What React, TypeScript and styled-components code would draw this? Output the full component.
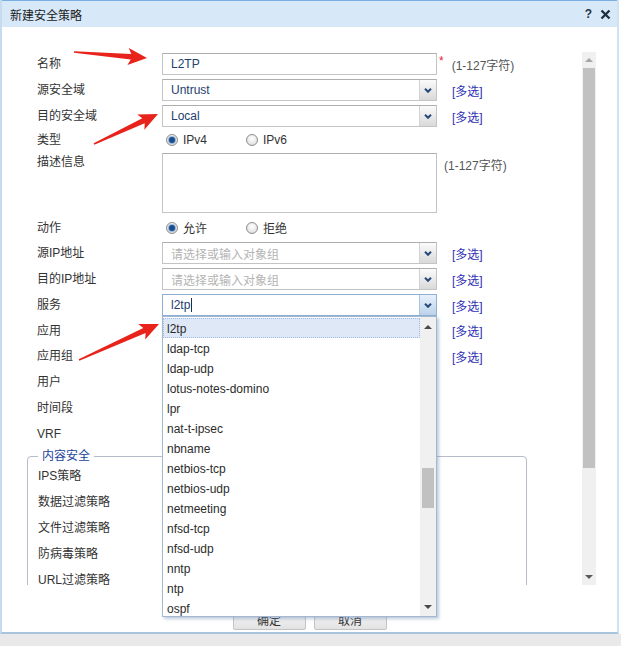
import React from 'react';
import styled, { createGlobalStyle, css } from 'styled-components';

const GlobalStyle = createGlobalStyle`
  * { box-sizing: border-box; }
  html, body { margin: 0; padding: 0; }
  body {
    background: #fff;
    font-family: "Liberation Sans", "Noto Sans CJK SC", sans-serif;
    font-size: 12px;
    color: #333;
  }
`;

const SERVICES = [
  'l2tp', 'ldap-tcp', 'ldap-udp', 'lotus-notes-domino', 'lpr', 'nat-t-ipsec', 'nbname',
  'netbios-tcp', 'netbios-udp', 'netmeeting', 'nfsd-tcp', 'nfsd-udp', 'nntp', 'ntp', 'ospf',
];

type Arrow = { x1: number; y1: number; x2: number; y2: number };

const ARROWS: Arrow[] = [
  { x1: 74, y1: 52, x2: 147, y2: 58 },
  { x1: 94, y1: 144, x2: 158, y2: 114 },
  { x1: 79, y1: 360, x2: 159, y2: 324 },
];

// tapered red arrow, like the screenshot tool draws them
const arrowPoints = ({ x1, y1, x2, y2 }: Arrow) => {
  const dx = x2 - x1;
  const dy = y2 - y1;
  const len = Math.hypot(dx, dy);
  const ux = dx / len;
  const uy = dy / len;
  const nx = -uy;
  const ny = ux;
  const head = 19;
  const barb = 8.5;
  const neck = 2.8;
  const tail = 0.8;
  const bx = x2 - ux * head;
  const by = y2 - uy * head;
  const p = (x: number, y: number) => `${x.toFixed(1)},${y.toFixed(1)}`;
  return [
    p(x1 + nx * tail, y1 + ny * tail),
    p(bx + ux * 3 + nx * neck, by + uy * 3 + ny * neck),
    p(bx + nx * barb, by + ny * barb),
    p(x2, y2),
    p(bx - nx * barb, by - ny * barb),
    p(bx + ux * 3 - nx * neck, by + uy * 3 - ny * neck),
    p(x1 - nx * tail, y1 - ny * tail),
  ].join(' ');
};

const Chevron = () => (
  <svg width="8" height="5" viewBox="0 0 8 5">
    <polyline points="1,0.8 4,3.8 7,0.8" fill="none" stroke="#27497a" strokeWidth="2" />
  </svg>
);

type ComboProps = { value?: string; placeholder?: string; active?: boolean; caret?: boolean };

const Combo = ({ value, placeholder, active, caret }: ComboProps) => (
  <S.ComboBox $active={active}>
    <S.ComboText $placeholder={!value}>
      {value || placeholder}
      {caret && <S.Caret />}
    </S.ComboText>
    <S.Trigger $active={active}>
      <Chevron />
    </S.Trigger>
  </S.ComboBox>
);

const Radios = ({ options, checked }: { options: string[]; checked: number }) => (
  <S.RadioGroup>
    {options.map((o, i) => (
      <S.RadioOption key={o}>
        <S.RadioDot $checked={i === checked} />
        {o}
      </S.RadioOption>
    ))}
  </S.RadioGroup>
);

const App = () => {
  return (
    <S.Page>
      <GlobalStyle />
      <S.Dialog>
        <S.TitleBar>
          <S.Title>新建安全策略</S.Title>
          <S.Tools>
            <S.Help>?</S.Help>
            <svg width="11" height="11" viewBox="0 0 11 11">
              <path d="M1.5 1.5 L9.5 9.5 M9.5 1.5 L1.5 9.5" stroke="#1f2d3d" strokeWidth="2.3" />
            </svg>
          </S.Tools>
        </S.TitleBar>

        <S.Body>
          <S.ScrollView>
            <S.Form>
              <S.Rows>
                <S.Row>
                  <S.Label>名称</S.Label>
                  <S.TextBox>L2TP</S.TextBox>
                  <S.Required>*</S.Required>
                  <S.Hint $ml={8}>(1-127字符)</S.Hint>
                </S.Row>
                <S.Row>
                  <S.Label>源安全域</S.Label>
                  <Combo value="Untrust" />
                  <S.Multi>[多选]</S.Multi>
                </S.Row>
                <S.Row>
                  <S.Label>目的安全域</S.Label>
                  <Combo value="Local" />
                  <S.Multi>[多选]</S.Multi>
                </S.Row>
                <S.Row $h={22}>
                  <S.Label>类型</S.Label>
                  <Radios options={['IPv4', 'IPv6']} checked={0} />
                </S.Row>
                <S.Row $h={64} $top>
                  <S.Label $pt={4}>描述信息</S.Label>
                  <S.TextArea />
                  <S.Hint $ml={7} $pt={5}>(1-127字符)</S.Hint>
                </S.Row>
                <S.Row $h={25}>
                  <S.Label>动作</S.Label>
                  <Radios options={['允许', '拒绝']} checked={0} />
                </S.Row>
                <S.Row>
                  <S.Label>源IP地址</S.Label>
                  <Combo placeholder="请选择或输入对象组" />
                  <S.Multi>[多选]</S.Multi>
                </S.Row>
                <S.Row>
                  <S.Label>目的IP地址</S.Label>
                  <Combo placeholder="请选择或输入对象组" />
                  <S.Multi>[多选]</S.Multi>
                </S.Row>
                <S.Row>
                  <S.Label>服务</S.Label>
                  <Combo value="l2tp" active caret />
                  <S.Multi>[多选]</S.Multi>
                </S.Row>
                <S.Row $h={25}>
                  <S.Label>应用</S.Label>
                  <Combo />
                  <S.Multi>[多选]</S.Multi>
                </S.Row>
                <S.Row>
                  <S.Label>应用组</S.Label>
                  <Combo />
                  <S.Multi>[多选]</S.Multi>
                </S.Row>
                <S.Row>
                  <S.Label>用户</S.Label>
                  <Combo />
                </S.Row>
                <S.Row>
                  <S.Label>时间段</S.Label>
                  <Combo />
                </S.Row>
                <S.Row>
                  <S.Label>VRF</S.Label>
                  <Combo />
                </S.Row>
              </S.Rows>

              <S.Group>
                <S.GroupTitle>内容安全</S.GroupTitle>
                {['IPS策略', '数据过滤策略', '文件过滤策略', '防病毒策略', 'URL过滤策略'].map((l) => (
                  <S.Row key={l}>
                    <S.Label $w={124}>{l}</S.Label>
                    <Combo />
                  </S.Row>
                ))}
              </S.Group>
            </S.Form>
          </S.ScrollView>

          <S.Scrollbar>
            <S.ScrollArrow $h={16}>
              <S.Tri $dir="up" $color="#a6a6a6" />
            </S.ScrollArrow>
            <S.Thumb $h={400} $mx={1} />
            <S.Spacer />
            <S.ScrollArrow $h={16}>
              <S.Tri $dir="down" $color="#5a5a5a" />
            </S.ScrollArrow>
          </S.Scrollbar>
        </S.Body>

        <S.Footer>
          <S.Button>确定</S.Button>
          <S.Button>取消</S.Button>
        </S.Footer>
      </S.Dialog>
      <S.Backdrop />

      <S.ServiceList>
        <S.ListItems>
          {SERVICES.map((s, i) => (
            <S.ListItem key={s} $selected={i === 0}>
              {s}
            </S.ListItem>
          ))}
        </S.ListItems>
        <S.ListScroll>
          <S.ScrollArrow $h={20}>
            <S.Tri $dir="up" $color="#4a4a4a" />
          </S.ScrollArrow>
          <S.Thumb $h={40} $mx={2} $mt={131} />
          <S.Spacer />
          <S.ScrollArrow $h={18}>
            <S.Tri $dir="down" $color="#4a4a4a" />
          </S.ScrollArrow>
        </S.ListScroll>
      </S.ServiceList>

      <S.Marks width="621" height="646" viewBox="0 0 621 646">
        {ARROWS.map((a, i) => (
          <polygon key={i} points={arrowPoints(a)} fill="#e8231b" />
        ))}
      </S.Marks>
    </S.Page>
  );
};

const fieldBox = css`
  width: 275px;
  height: 22px;
  flex: none;
  background: #fff;
  border: 1px solid #c4c4c4;
  border-top-color: #aeaeae;
`;

const S = {
  Page: styled.div`
    position: relative;
    width: 621px;
    height: 646px;
    overflow: hidden;
    background: #fff;
  `,
  Dialog: styled.div`
    width: 619px;
    height: 634px;
    display: flex;
    flex-direction: column;
    background: #fff;
    border-left: 2px solid #c6dbee;
    border-right: 2px solid #cfe2f3;
    border-bottom: 2px solid #a9c5de;
  `,
  Backdrop: styled.div`
    height: 12px;
    background: #e9e9e9;
  `,
  TitleBar: styled.div`
    height: 27px;
    flex: none;
    display: flex;
    align-items: center;
    padding: 0 6px 0 8px;
    background: #d7e9f8;
    border-top: 1px solid #78aee0;
  `,
  Title: styled.div`
    flex: 1;
    font-size: 12px;
    color: #1a1a1a;
  `,
  Tools: styled.div`
    display: flex;
    align-items: center;
    gap: 8px;
  `,
  Help: styled.span`
    font-weight: bold;
    font-size: 12px;
    color: #26323f;
  `,
  Body: styled.div`
    height: 558px;
    flex: none;
    display: flex;
    padding-top: 24px;
  `,
  ScrollView: styled.div`
    width: 580px;
    height: 534px;
    overflow: hidden;
  `,
  Form: styled.div`
    padding-left: 25px;
  `,
  Rows: styled.div`
    padding-left: 10px;
  `,
  Row: styled.div<{ $h?: number; $top?: boolean }>`
    display: flex;
    align-items: ${({ $top }) => ($top ? 'flex-start' : 'center')};
    height: ${({ $h }) => $h ?? 26}px;
  `,
  Label: styled.div<{ $w?: number; $pt?: number }>`
    width: ${({ $w }) => $w ?? 125}px;
    flex: none;
    padding-top: ${({ $pt }) => $pt ?? 0}px;
    line-height: 14px;
    color: #333;
  `,
  TextBox: styled.div`
    ${fieldBox};
    display: flex;
    align-items: center;
    padding-left: 8px;
    color: #23406e;
  `,
  TextArea: styled.div`
    ${fieldBox};
    height: 60px;
    margin-top: 2px;
  `,
  ComboBox: styled.div<{ $active?: boolean }>`
    ${fieldBox};
    display: flex;
    ${({ $active }) => $active && 'border-color: #8fb0d4;'}
  `,
  ComboText: styled.div<{ $placeholder?: boolean }>`
    flex: 1;
    display: flex;
    align-items: center;
    padding-left: 8px;
    color: ${({ $placeholder }) => ($placeholder ? '#b4b4b4' : '#23406e')};
  `,
  Caret: styled.span`
    width: 1px;
    height: 14px;
    margin-left: 1px;
    background: #1d3152;
  `,
  Trigger: styled.div<{ $active?: boolean }>`
    width: 17px;
    display: flex;
    align-items: center;
    justify-content: center;
    border-left: 1px solid ${({ $active }) => ($active ? '#a9c4e2' : '#d2d2d2')};
    background: ${({ $active }) =>
      $active ? 'linear-gradient(#e8f1fb, #bcd2ea)' : 'linear-gradient(#fbfbfb, #d9d9d9)'};
  `,
  Required: styled.span`
    align-self: flex-start;
    margin: 4px 0 0 2px;
    color: #e8262b;
    font-size: 12px;
    line-height: 12px;
  `,
  Hint: styled.span<{ $ml: number; $pt?: number }>`
    margin-left: ${({ $ml }) => $ml}px;
    padding-top: ${({ $pt }) => $pt ?? 0}px;
    color: #555;
  `,
  Multi: styled.span`
    margin-left: 15px;
    color: #2f2fb4;
  `,
  RadioGroup: styled.div`
    display: flex;
    margin-left: 4px;
  `,
  RadioOption: styled.label`
    width: 80px;
    display: flex;
    align-items: center;
    gap: 5px;
    color: #333;
  `,
  RadioDot: styled.span<{ $checked?: boolean }>`
    width: 12px;
    height: 12px;
    border-radius: 50%;
    border: 1px solid #8c8c8c;
    background: radial-gradient(circle at 50% 35%, #fff, #d8d8d8);
    display: inline-flex;
    align-items: center;
    justify-content: center;
    &::after {
      content: '';
      display: ${({ $checked }) => ($checked ? 'block' : 'none')};
      width: 6px;
      height: 6px;
      border-radius: 50%;
      background: #1d4d8c;
      box-shadow: 0 0 0 1px #94b6dc;
    }
  `,
  Group: styled.fieldset`
    width: 500px;
    min-width: 0;
    margin: 3px 0 0;
    padding: 0 10px 10px;
    border: 1px solid #b7bccb;
    border-radius: 4px;
  `,
  GroupTitle: styled.legend`
    padding: 0 4px;
    line-height: 13px;
    font-size: 12px;
    color: #23459b;
  `,
  Scrollbar: styled.div`
    width: 14px;
    height: 533px;
    margin-top: 1px;
    display: flex;
    flex-direction: column;
    background: #f0f0f0;
  `,
  ScrollArrow: styled.div<{ $h: number }>`
    height: ${({ $h }) => $h}px;
    flex: none;
    display: flex;
    align-items: center;
    justify-content: center;
  `,
  Tri: styled.span<{ $dir: 'up' | 'down'; $color: string }>`
    width: 0;
    height: 0;
    border-left: 4px solid transparent;
    border-right: 4px solid transparent;
    ${({ $dir, $color }) =>
      $dir === 'up' ? `border-bottom: 4px solid ${$color};` : `border-top: 4px solid ${$color};`}
  `,
  Thumb: styled.div<{ $h: number; $mx: number; $mt?: number }>`
    height: ${({ $h }) => $h}px;
    flex: none;
    margin: ${({ $mt }) => $mt ?? 0}px ${({ $mx }) => $mx}px 0;
    background: #c1c1c1;
  `,
  Spacer: styled.div`
    flex: 1;
  `,
  Footer: styled.div`
    flex: 1;
    display: flex;
    justify-content: center;
    gap: 8px;
    padding-top: 23px;
  `,
  Button: styled.button`
    width: 73px;
    height: 22px;
    padding: 0;
    border: 1px solid #c4c4c4;
    border-radius: 2px;
    background: linear-gradient(#fbfbfb, #e2e2e2);
    font: inherit;
    color: #333;
  `,
  ServiceList: styled.div`
    position: absolute;
    left: 162px;
    top: 316px;
    width: 275px;
    height: 301px;
    display: flex;
    background: #fff;
    border: 1px solid #a4b8d2;
    box-shadow: 2px 2px 3px rgba(110, 140, 180, 0.45);
  `,
  ListItems: styled.div`
    flex: 1;
    padding-top: 1px;
    overflow: hidden;
  `,
  ListItem: styled.div<{ $selected?: boolean }>`
    height: 20px;
    line-height: 20px;
    padding-left: 3px;
    border: 1px solid transparent;
    color: #2b2b2b;
    ${({ $selected }) =>
      $selected &&
      css`
        background: #dfe8f6;
        border: 1px dotted #a3bae9;
      `}
  `,
  ListScroll: styled.div`
    width: 16px;
    display: flex;
    flex-direction: column;
    background: #f0f0f0;
  `,
  Marks: styled.svg`
    position: absolute;
    left: 0;
    top: 0;
    pointer-events: none;
  `,
};

export default App;
